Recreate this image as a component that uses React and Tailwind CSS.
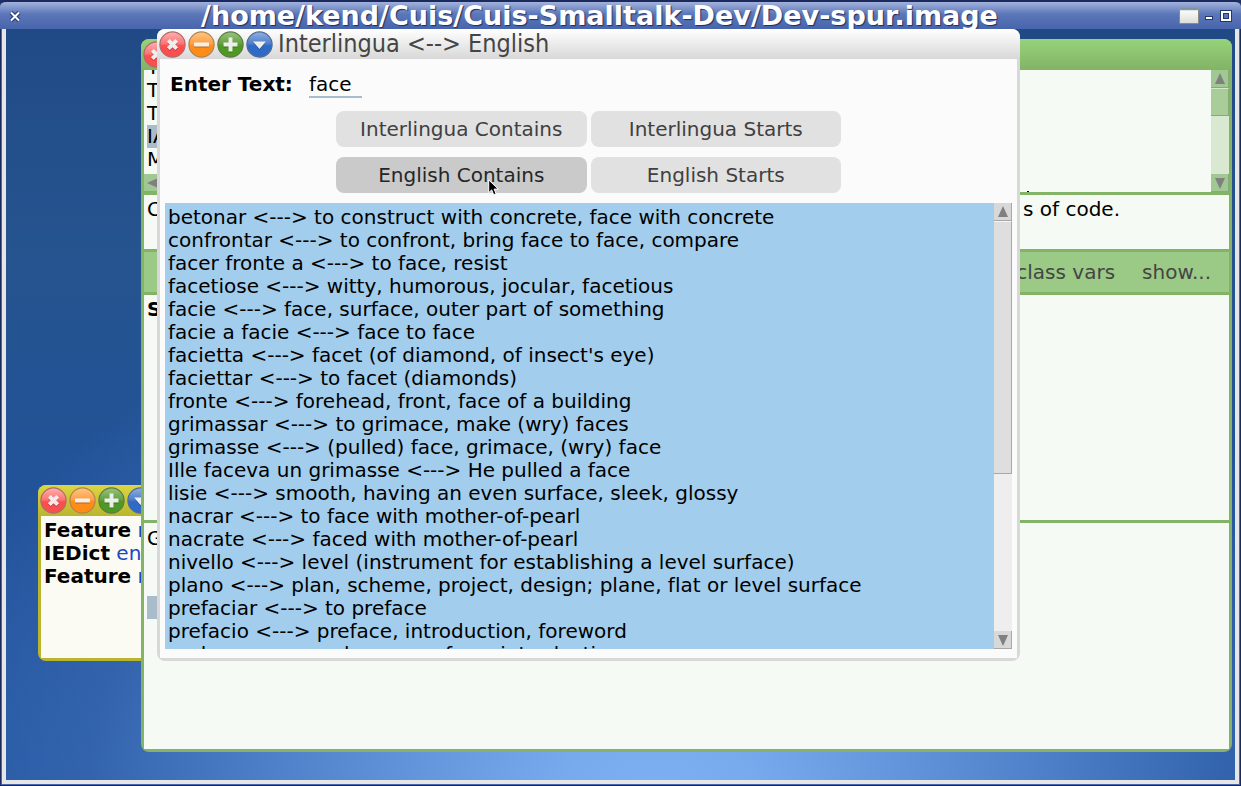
import React from "react";

const entries = [
  "betonar <---> to construct with concrete, face with concrete",
  "confrontar <---> to confront, bring face to face, compare",
  "facer fronte a <---> to face, resist",
  "facetiose <---> witty, humorous, jocular, facetious",
  "facie <---> face, surface, outer part of something",
  "facie a facie <---> face to face",
  "facietta <---> facet (of diamond, of insect's eye)",
  "faciettar <---> to facet (diamonds)",
  "fronte <---> forehead, front, face of a building",
  "grimassar <---> to grimace, make (wry) faces",
  "grimasse <---> (pulled) face, grimace, (wry) face",
  "Ille faceva un grimasse <---> He pulled a face",
  "lisie <---> smooth, having an even surface, sleek, glossy",
  "nacrar <---> to face with mother-of-pearl",
  "nacrate <---> faced with mother-of-pearl",
  "nivello <---> level (instrument for establishing a level surface)",
  "plano <---> plan, scheme, project, design; plane, flat or level surface",
  "prefaciar <---> to preface",
  "prefacio <---> preface, introduction, foreword",
  "prologo <---> prologue, preface, introduction",
];

const orbs = {
  close: { light: "#ffb0b0", mid: "#fb7575", dark: "#fb4f4f", edge: "#b06a6a", label: "Close" },
  collapse: { light: "#ffc684", mid: "#fd9f45", dark: "#ff8c16", edge: "#b08550", label: "Collapse" },
  expand: { light: "#9ac480", mid: "#66a040", dark: "#4f9826", edge: "#5c7c48", label: "Expand" },
  menu: { light: "#90b0e2", mid: "#4f7ec9", dark: "#2f6ac6", edge: "#506a98", label: "Window menu" },
};

function Glyph({ kind }) {
  if (kind === "close") return <path d="M9.3 9.3l8.4 8.4M17.7 9.3l-8.4 8.4" stroke="currentColor" strokeWidth="4" />;
  if (kind === "collapse") return <path d="M6 13.5h15" stroke="currentColor" strokeWidth="4" />;
  if (kind === "expand") return <path d="M6.5 13.5h14M13.5 6.5v14" stroke="currentColor" strokeWidth="4" />;
  return <path d="M7 10.5h13l-6.5 7.5z" fill="currentColor" />;
}

function Orb({ kind, owner }) {
  const c = orbs[kind];
  const id = owner + "-" + kind;
  return (
    <button type="button" aria-label={c.label} className="size-[27px] shrink-0">
      <svg viewBox="0 0 27 27" className="block size-full">
        <defs>
          <linearGradient id={id} x1="0" y1="0" x2="0" y2="1">
            <stop offset="0" stopColor={c.light} />
            <stop offset="0.47" stopColor={c.mid} />
            <stop offset="0.55" stopColor={c.dark} />
            <stop offset="1" stopColor={c.dark} />
          </linearGradient>
        </defs>
        <circle cx="13.5" cy="13.5" r="12.6" fill={"url(#" + id + ")"} stroke={c.edge} strokeWidth="1.2" />
        <g className="text-black" opacity="0.25" transform="translate(0 1)">
          <Glyph kind={kind} />
        </g>
        <g className="text-[#f6f6f6]" opacity="0.94">
          <Glyph kind={kind} />
        </g>
      </svg>
    </button>
  );
}

function Orbs({ owner }) {
  return (
    <div className="flex shrink-0 gap-[2px]">
      {Object.keys(orbs).map((k) => (
        <Orb key={k} kind={k} owner={owner} />
      ))}
    </div>
  );
}

function Arrow({ dir }) {
  const d = { up: "M9 3l5 11H4z", down: "M9 15l5-11H4z", left: "M3 9l11-5v10z" }[dir];
  return (
    <svg viewBox="0 0 18 18" className="block size-[18px]">
      <path d={d} fill="#808080" />
    </svg>
  );
}

function GreyScroll() {
  return (
    <div className="flex w-[18px] shrink-0 flex-col bg-[#eeeeee]">
      <button type="button" aria-label="Scroll up" className="h-[18px] overflow-hidden border-r border-b border-[#a8a8a8] bg-[#d8d8d8]">
        <Arrow dir="up" />
      </button>
      <div className="h-[253px] border-t border-r border-b border-t-[#f4f4f4] border-r-[#a8a8a8] border-b-[#a8a8a8] bg-[#dedede]" />
      <button type="button" aria-label="Scroll down" className="mt-auto h-[18px] overflow-hidden border-r border-b border-[#a8a8a8] bg-[#d8d8d8]">
        <Arrow dir="down" />
      </button>
    </div>
  );
}

function GreenScroll() {
  return (
    <div className="flex w-[18px] shrink-0 flex-col bg-[#d9e8d1]">
      <button type="button" aria-label="Scroll up" className="h-[18px] overflow-hidden border-r border-b border-[#86aa78] bg-[#a0c893]">
        <Arrow dir="up" />
      </button>
      <div className="h-[28px] border-t border-r border-b border-t-[#d4e6cb] border-r-[#86aa78] border-b-[#86aa78] bg-[#a8cd98]" />
      <button type="button" aria-label="Scroll down" className="mt-auto h-[18px] overflow-hidden border-r border-b border-[#86aa78] bg-[#a0c893]">
        <Arrow dir="down" />
      </button>
    </div>
  );
}

function ScriptWindow() {
  return (
    <section className="absolute top-[456px] left-[32px] w-[260px] overflow-hidden rounded-lg bg-[#bab52f]">
      <header className="flex h-[31px] items-center bg-linear-to-b from-[#dbd642] to-[#bab52f] pl-[2px]">
        <Orbs owner="script" />
      </header>
      <div className="mx-[3px] mb-[3px] h-[142px] bg-[#fbfbf3] px-[3px] pt-[3px] text-[20px] leading-[23px] text-[#1c45c8]">
        <p><b className="text-black">Feature</b> r</p>
        <p><b className="text-black">IEDict</b> eng</p>
        <p><b className="text-black">Feature</b> r</p>
      </div>
    </section>
  );
}

function BrowserWindow() {
  return (
    <section className="absolute top-[10px] right-[3px] bottom-[28px] left-[135px] flex flex-col overflow-hidden rounded-lg bg-[#82b366] pb-[3px] text-[20px] leading-[23px] text-black">
      <header className="flex h-[31px] shrink-0 items-center bg-linear-to-b from-[#97d37b] to-[#82b366] pl-[2px]">
        <Orbs owner="browser" />
      </header>
      <div className="mx-[3px] flex flex-1 flex-col gap-[3px]">
        <div className="flex h-[122px] shrink-0 bg-[#f5faf4]">
          <div className="flex flex-1 flex-col overflow-hidden">
            <ul className="-mt-[14px] h-[118px] overflow-hidden px-[3px]">
              <li>T</li>
              <li>T</li>
              <li>T</li>
              <li className="bg-[#a9bccb]">IA</li>
              <li>M</li>
            </ul>
            <div className="h-[18px] border-b border-[#86aa78] bg-[#a0c893]">
              <Arrow dir="left" />
            </div>
          </div>
          <div className="flex w-[200px] flex-col justify-end pl-[16px]">
            <span className="h-px w-[2px] bg-black" />
          </div>
          <GreenScroll />
        </div>
        <div className="flex h-[54px] shrink-0 justify-between bg-[#f5faf4] pt-[3px] pr-[109px] pl-[3px]">
          <span>C</span>
          <span>s of code.</span>
        </div>
        <div className="flex h-[40px] shrink-0 items-center justify-end gap-[27px] bg-[#9bc986] pr-[18px] text-[#454545] [text-shadow:0_1px_0_#c9e2bd]">
          <button type="button">class vars</button>
          <button type="button">show...</button>
        </div>
        <div className="h-[225px] shrink-0 bg-[#f5faf4] px-[3px] pt-[3px]">
          <b>S</b>
        </div>
        <div className="flex-1 bg-[#f5faf4] px-[3px] pt-[4px]">
          <p>G</p>
          <div className="mt-[46px] h-[23px] w-[60px] bg-[#a9bccb]" />
        </div>
      </div>
    </section>
  );
}

function DictionaryButton({ children, active }) {
  return (
    <button
      type="button"
      className={
        active
          ? "h-9 rounded-lg bg-[#cacaca] text-[#262626]"
          : "h-9 rounded-lg bg-[#e1e1e1] text-[#404040]"
      }
    >
      {children}
    </button>
  );
}

function DictionaryWindow() {
  return (
    <section className="absolute top-0 right-[215px] left-[151px] flex flex-col overflow-hidden rounded-lg bg-[#d8d8d8] pb-[3px] text-[20px] leading-[23px] text-black">
      <header className="flex h-[30px] items-center gap-[5px] bg-linear-to-b from-white to-[#d8d8d8] pl-[2px]">
        <Orbs owner="dictionary" />
        <h2 className="font-['DejaVu_Sans_Condensed','DejaVu_Sans',sans-serif] text-[25px] leading-[30px] whitespace-pre text-[#454545]">Interlingua &lt;--&gt; English</h2>
      </header>
      <div className="mx-[3px] flex flex-col bg-[#fbfbfb] px-[5px] pb-[9px]">
        <div className="flex h-[52px] items-start gap-[16px] pt-[13px] pl-[5px]">
          <label htmlFor="query" className="leading-[25px] font-bold">Enter Text:</label>
          <input id="query" defaultValue="face" className="h-[26px] w-[53px] border-b-2 border-[#a9bccb] bg-transparent outline-none" />
        </div>
        <div className="mx-auto grid w-[505px] grid-cols-2 gap-x-1 gap-y-[10px]">
          <DictionaryButton>Interlingua Contains</DictionaryButton>
          <DictionaryButton>Interlingua Starts</DictionaryButton>
          <DictionaryButton active>English Contains</DictionaryButton>
          <DictionaryButton>English Starts</DictionaryButton>
        </div>
        <div className="mt-[10px] flex h-[446px]">
          <ul className="flex-1 overflow-hidden bg-[#a2cdec] px-[3px] pt-[3px] whitespace-nowrap">
            {entries.map((e) => (
              <li key={e}>{e}</li>
            ))}
          </ul>
          <GreyScroll />
        </div>
      </div>
    </section>
  );
}

export default function App() {
  return (
    <div className="flex min-h-screen flex-col overflow-hidden bg-[#1c2f66] font-['DejaVu_Sans',sans-serif] [font-variant-ligatures:none]">
      <header className="flex h-[29px] shrink-0 items-center rounded-t-md border-t-2 border-[#1b2a5c] bg-linear-to-b from-[#a3b2dc] via-[#5b77b8] via-45% to-[#4865ad] px-[9px]">
        <button type="button" aria-label="Close" className="size-[12px]">
          <svg viewBox="0 0 12 12" className="block size-full overflow-visible">
            <path d="M2 2.5l8 8M10 2.5l-8 8" stroke="#24366f" strokeWidth="4" />
            <path d="M2 2.5l8 8M10 2.5l-8 8" stroke="#fff" strokeWidth="2" />
          </svg>
        </button>
        <h1 className="flex-1 text-center text-[27px] leading-[27px] font-bold whitespace-nowrap text-white [text-shadow:1px_1px_1px_#1d2d60]">
          /home/kend/Cuis/Cuis-Smalltalk-Dev/Dev-spur.image
        </h1>
        <div className="flex items-center gap-[5px]">
          <button type="button" aria-label="Shade" className="size-[22px]">
            <svg viewBox="0 0 22 22" className="block size-full">
              <defs>
                <linearGradient id="shade" x1="0" y1="0" x2="0" y2="1">
                  <stop offset="0" stopColor="#fff" />
                  <stop offset="1" stopColor="#dcdcd6" />
                </linearGradient>
              </defs>
              <rect x="1.5" y="3.5" width="19" height="15" rx="1" fill="url(#shade)" stroke="#8a8a86" />
              <path d="M2 4.5h18" stroke="#6d9bd2" strokeWidth="1.5" />
            </svg>
          </button>
          <button type="button" aria-label="Minimize" className="size-[10px]">
            <svg viewBox="0 0 10 10" className="block size-full overflow-visible">
              <rect x="0.5" y="5.5" width="7" height="3" fill="#fff" stroke="#24366f" />
            </svg>
          </button>
          <button type="button" aria-label="Maximize" className="size-[12px]">
            <svg viewBox="0 0 12 12" className="block size-full overflow-visible">
              <rect x="2" y="2" width="8" height="8" fill="none" stroke="#24366f" strokeWidth="4" />
              <rect x="2" y="2" width="8" height="8" fill="none" stroke="#fff" strokeWidth="2" />
            </svg>
          </button>
        </div>
      </header>
      <div className="flex flex-1 flex-col border-x border-b border-[#1b2a5c]">
        <div className="flex flex-1 flex-col border-x border-b border-[#4766b4]">
          <main className="relative flex-1 overflow-hidden border-x-4 border-b-4 border-[#e6e6e6] bg-[radial-gradient(ellipse_62%_72%_at_53%_102%,#7db0f2_0%,#78abee_12%,#4e81c9_50%,rgba(52,100,174,0.9)_75%,rgba(36,86,160,0)_100%),linear-gradient(180deg,#204a86_0%,#26548f_30%,#225298_60%,#2558a3_100%)]">
            <ScriptWindow />
            <BrowserWindow />
            <DictionaryWindow />
            <svg viewBox="0 0 12 18" className="absolute top-[150px] left-[482px] h-[18px] w-[12px]" aria-hidden="true">
              <path d="M.7.9v12.8l3-2.8 2 4.8 2.4-1-2-4.6h4.2z" fill="#000" stroke="#fff" strokeWidth="1" />
            </svg>
          </main>
        </div>
      </div>
    </div>
  );
}
